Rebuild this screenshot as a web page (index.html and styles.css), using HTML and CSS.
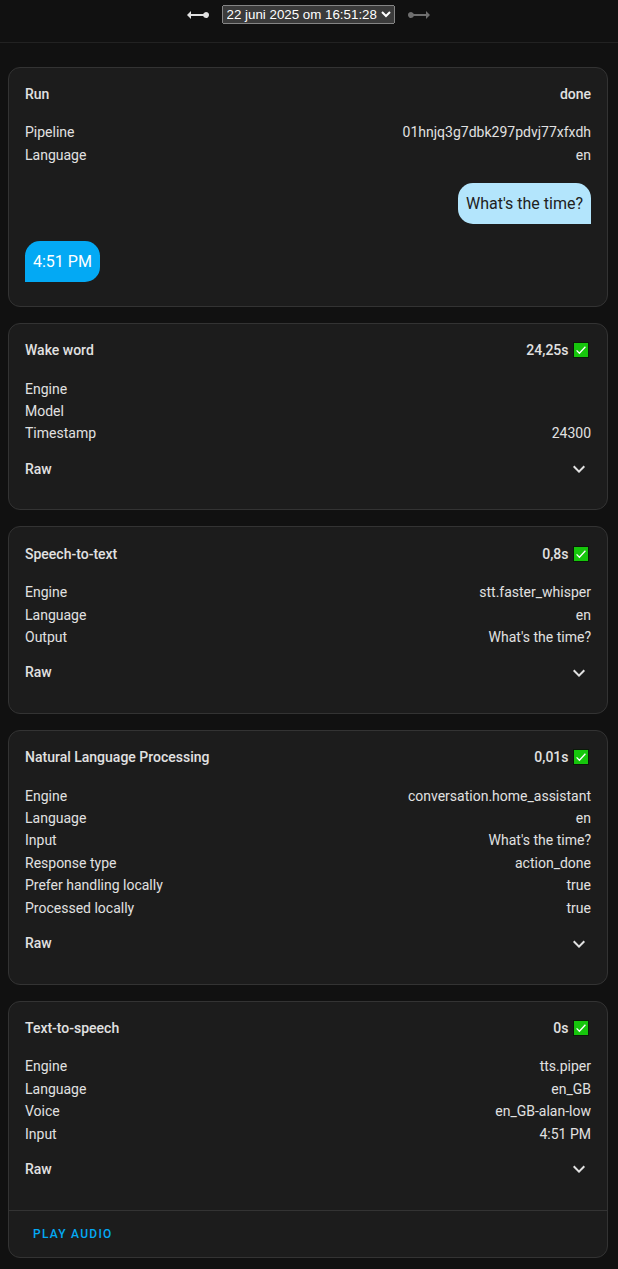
FILE: index.html
```html
<!DOCTYPE html>
<html lang="nl">
<head>
	<meta charset="UTF-8">
	<title>Pipeline debug</title>
	<link rel="stylesheet" href="styles.css">
</head>
<body>

	<svg class="defs" width="0" height="0">
		<symbol id="check" viewBox="0 0 16 16">
			<rect width="16" height="16" fill="#0a1a08"/>
			<rect x="1" y="1" width="14" height="14" fill="#16c60c"/>
			<path d="M3.6 8.4 L6.4 11.2 L12.4 4.7" fill="none" stroke="#fff" stroke-width="1.3"/>
		</symbol>
		<symbol id="chevron" viewBox="0 0 24 24">
			<path d="M7.41,8.58L12,13.17L16.59,8.58L18,10L12,16L6,10L7.41,8.58Z" fill="currentColor"/>
		</symbol>
	</svg>

	<div class="toolbar">
		<svg class="arrow" viewBox="0 0 24 24"><path d="M1 12L5 8V11H17.2A3 3 0 1 1 17.2 13H5V16Z" fill="currentColor"/></svg>
		<select>
			<option>22 juni 2025 om 16:51:28</option>
		</select>
		<svg class="arrow disabled" viewBox="0 0 24 24"><path d="M23 12L19 16V13H6.8A3 3 0 1 1 6.8 11H19V8Z" fill="currentColor"/></svg>
	</div>

	<div class="content">
		<div class="card">
			<div class="card-content">
				<div class="row heading"><div>Run</div><div>done</div></div>
				<div class="row"><div>Pipeline</div><div>01hnjq3g7dbk297pdvj77xfxdh</div></div>
				<div class="row"><div>Language</div><div>en</div></div>
				<div class="messages">
					<div class="message user">What's the time?</div>
					<div class="message hass">4:51 PM</div>
				</div>
			</div>
		</div>

		<div class="card">
			<div class="card-content">
				<div class="row heading"><div>Wake word</div><div>24,25s <svg class="check"><use href="#check"/></svg></div></div>
				<div class="row"><div>Engine</div><div></div></div>
				<div class="row"><div>Model</div><div></div></div>
				<div class="row"><div>Timestamp</div><div>24300</div></div>
				<div class="raw">Raw <svg class="chevron"><use href="#chevron"/></svg></div>
			</div>
		</div>

		<div class="card">
			<div class="card-content">
				<div class="row heading"><div>Speech-to-text</div><div>0,8s <svg class="check"><use href="#check"/></svg></div></div>
				<div class="row"><div>Engine</div><div>stt.faster_whisper</div></div>
				<div class="row"><div>Language</div><div>en</div></div>
				<div class="row"><div>Output</div><div>What's the time?</div></div>
				<div class="raw">Raw <svg class="chevron"><use href="#chevron"/></svg></div>
			</div>
		</div>

		<div class="card">
			<div class="card-content">
				<div class="row heading"><div>Natural Language Processing</div><div>0,01s <svg class="check"><use href="#check"/></svg></div></div>
				<div class="row"><div>Engine</div><div>conversation.home_assistant</div></div>
				<div class="row"><div>Language</div><div>en</div></div>
				<div class="row"><div>Input</div><div>What's the time?</div></div>
				<div class="row"><div>Response type</div><div>action_done</div></div>
				<div class="row"><div>Prefer handling locally</div><div>true</div></div>
				<div class="row"><div>Processed locally</div><div>true</div></div>
				<div class="raw">Raw <svg class="chevron"><use href="#chevron"/></svg></div>
			</div>
		</div>

		<div class="card">
			<div class="card-content">
				<div class="row heading"><div>Text-to-speech</div><div>0s <svg class="check"><use href="#check"/></svg></div></div>
				<div class="row"><div>Engine</div><div>tts.piper</div></div>
				<div class="row"><div>Language</div><div>en_GB</div></div>
				<div class="row"><div>Voice</div><div>en_GB-alan-low</div></div>
				<div class="row"><div>Input</div><div>4:51 PM</div></div>
				<div class="raw">Raw <svg class="chevron"><use href="#chevron"/></svg></div>
			</div>
			<div class="card-actions">
				<button class="play">Play Audio</button>
			</div>
		</div>
	</div>

</body>
</html>
```
FILE: styles.css
```css
:root { color-scheme: dark }
body {
	margin: 0;
	background: #111;
	color: #e1e1e1;
	font: 14px/1.6 Roboto, sans-serif;
}
.defs { position: absolute }
.toolbar {
	display: flex;
	justify-content: center;
	align-items: flex-start;
	height: 43px;
	padding: 1px 2px 0 0;
	box-sizing: border-box;
	border-bottom: 1px solid #222;
}
.toolbar select {
	margin: 4px 12px 0;
	width: 173px;
	height: 19px;
	font: 13.333px "Liberation Sans", Arial, sans-serif;
	color: #fff;
}
.arrow { width: 24px; height: 24px; margin-top: 2px }
.disabled { color: #6f6f6f }
.content { padding: 23.6px 10px 0 8px }
.card {
	margin-bottom: 16px;
	background: #1c1c1c;
	border: 1px solid #333;
	border-radius: 12px;
}
.card-content { padding: 15.3px 16px 16.7px }
.row {
	display: flex;
	justify-content: space-between;
}
.heading {
	margin-bottom: 16px;
	font-weight: 500;
}
.check {
	width: 16px;
	height: 16px;
	margin: 0 2px 0 1px;
	vertical-align: -3px;
}
.raw {
	display: flex;
	justify-content: space-between;
	align-items: center;
	height: 48px;
	font-weight: 500;
}
.chevron { width: 24px; height: 24px; margin-top: 1px }
.messages {
	display: flex;
	flex-direction: column;
	align-items: flex-start;
	gap: 16.4px;
	padding: 16.7px 0 6.9px;
}
.message {
	padding: 8px;
	border-radius: 15px;
	font-size: 16px;
}
.user {
	align-self: flex-end;
	border-bottom-right-radius: 0;
	background: #b3e5fc;
	color: #212121;
}
.hass {
	border-bottom-left-radius: 0;
	background: #03a9f4;
	color: #fff;
}
.card-actions {
	padding: 5px 8px;
	border-top: 1px solid #333;
}
.play {
	display: block;
	height: 36px;
	padding: 0 16px;
	border: 0;
	background: none;
	color: #03a9f4;
	font: 500 12px Roboto, sans-serif;
	letter-spacing: 1.25px;
	text-transform: uppercase;
	cursor: pointer;
}
```
